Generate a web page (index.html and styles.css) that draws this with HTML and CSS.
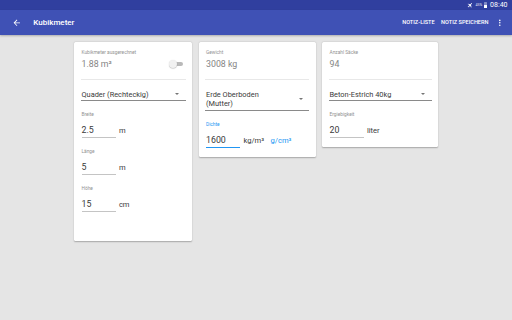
FILE: index.html
```html
<!DOCTYPE html>
<html lang="de">
<head>
    <meta charset="UTF-8">
    <meta name="viewport" content="width=device-width, initial-scale=1.0">
    <title>Kubikmeter</title>
    <link rel="stylesheet" href="styles.css">
</head>
<body>
    <!-- Status bar -->
    <div class="status-bar">
        <svg class="plane" viewBox="0 0 24 24"><path d="M21 16v-2l-8-5V3.5c0-.83-.67-1.5-1.5-1.5S10 2.67 10 3.5V9l-8 5v2l8-2.5V19l-2 1.5V22l3.5-1 3.5 1v-1.5L13 19v-5.5l8 2.5z"/></svg>
        <span class="battery-text">45%</span>
        <span class="battery"><span class="battery-fill"></span></span>
        <span class="clock">08:40</span>
    </div>

    <!-- Toolbar -->
    <header class="toolbar">
        <svg class="nav-icon" viewBox="0 0 24 24"><path d="M20 11H7.83l5.59-5.59L12 4l-8 8 8 8 1.41-1.41L7.83 13H20v-2z"/></svg>
        <h1 class="title">Kubikmeter</h1>
        <div class="actions">
            <span class="action">NOTIZ-LISTE</span>
            <span class="action">NOTIZ SPEICHERN</span>
            <svg class="menu-icon" viewBox="0 0 24 24"><path d="M12 8c1.1 0 2-.9 2-2s-.9-2-2-2-2 .9-2 2 .9 2 2 2zm0 2c-1.1 0-2 .9-2 2s.9 2 2 2 2-.9 2-2-.9-2-2-2zm0 6c-1.1 0-2 .9-2 2s.9 2 2 2 2-.9 2-2-.9-2-2-2z"/></svg>
        </div>
    </header>

    <main class="cards">
        <!-- Volume card -->
        <section class="card card-tall">
            <div class="result">
                <div class="label">Kubikmeter ausgerechnet</div>
                <div class="result-row">
                    <span class="value">1.88 m³</span>
                    <span class="switch"><span class="switch-thumb"></span></span>
                </div>
            </div>
            <div class="divider"></div>
            <div class="spinner">
                <span class="spinner-text">Quader (Rechteckig)</span>
                <span class="arrow"></span>
            </div>
            <div class="field">
                <div class="label">Breite</div>
                <div class="input-row">
                    <span class="input">2.5</span>
                    <span class="unit">m</span>
                </div>
            </div>
            <div class="field">
                <div class="label">Länge</div>
                <div class="input-row">
                    <span class="input">5</span>
                    <span class="unit">m</span>
                </div>
            </div>
            <div class="field">
                <div class="label">Höhe</div>
                <div class="input-row">
                    <span class="input">15</span>
                    <span class="unit">cm</span>
                </div>
            </div>
        </section>

        <!-- Weight card -->
        <section class="card">
            <div class="result">
                <div class="label">Gewicht</div>
                <div class="result-row">
                    <span class="value">3008 kg</span>
                </div>
            </div>
            <div class="divider"></div>
            <div class="spinner">
                <span class="spinner-text">Erde Oberboden<br>(Mutter)</span>
                <span class="arrow"></span>
            </div>
            <div class="field">
                <div class="label label-active">Dichte</div>
                <div class="input-row">
                    <span class="input input-active">1600</span>
                    <span class="unit">kg/m³</span>
                    <span class="unit unit-link">g/cm³</span>
                </div>
            </div>
        </section>

        <!-- Bags card -->
        <section class="card">
            <div class="result">
                <div class="label">Anzahl Säcke</div>
                <div class="result-row">
                    <span class="value">94</span>
                </div>
            </div>
            <div class="divider"></div>
            <div class="spinner">
                <span class="spinner-text">Beton-Estrich 40kg</span>
                <span class="arrow"></span>
            </div>
            <div class="field">
                <div class="label">Ergiebigkeit</div>
                <div class="input-row">
                    <span class="input">20</span>
                    <span class="unit">liter</span>
                </div>
            </div>
        </section>
    </main>
</body>
</html>
```

FILE: styles.css
```css
* {
    margin: 0;
    padding: 0;
    box-sizing: border-box;
}

body {
    font-family: Roboto, "Noto Sans", sans-serif;
    background-color: #e5e5e5;
    width: 512px;
    height: 320px;
    overflow: hidden;
}

/* Status bar */
.status-bar {
    height: 9.6px;
    background-color: #303f9f;
    display: flex;
    justify-content: flex-end;
    align-items: center;
    padding-right: 4.5px;
    color: #fff;
}

.plane {
    width: 6.4px;
    height: 6.4px;
    fill: #fff;
    transform: rotate(45deg);
    margin-right: 2.5px;
}

.battery-text {
    font-size: 3.6px;
    margin-right: 1.8px;
    opacity: 0.85;
}

.battery {
    width: 3.6px;
    height: 6px;
    background-color: rgba(255, 255, 255, 0.4);
    border-radius: 0.5px;
    display: flex;
    align-items: flex-end;
    margin-right: 2.6px;
}

.battery-fill {
    width: 100%;
    height: 45%;
    background-color: #fff;
}

.clock {
    font-size: 7px;
    line-height: 8px;
}

/* Toolbar */
.toolbar {
    height: 25.6px;
    background-color: #3f51b5;
    display: flex;
    align-items: center;
    padding-left: 12.4px;
    padding-right: 7.5px;
    color: #fff;
    box-shadow: 0 1px 2px rgba(0, 0, 0, 0.25);
}

.nav-icon {
    width: 9.6px;
    height: 9.6px;
    fill: #fff;
}

.title {
    font-size: 8px;
    font-weight: 500;
    margin-left: 11.3px;
    flex: 1;
}

.actions {
    display: flex;
    align-items: center;
    gap: 6.4px;
}

.action {
    font-size: 5.6px;
    font-weight: 500;
}

.menu-icon {
    width: 9.6px;
    height: 9.6px;
    fill: #fff;
}

/* Cards */
.cards {
    display: grid;
    grid-template-columns: 118px 117px 116px;
    gap: 6.5px;
    justify-content: center;
    align-items: start;
    padding-top: 6.8px;
}

.card {
    background-color: #fff;
    border-radius: 1.5px;
    box-shadow: 0 0.6px 1.5px rgba(0, 0, 0, 0.28);
    padding: 8px 6.5px 9px;
}

.card-tall {
    padding-bottom: 29px;
}

.label {
    font-size: 4.8px;
    line-height: 6px;
    color: #929292;
}

.label-active {
    color: #2196f3;
}

.result {
    padding-left: 1px;
}

.result-row {
    display: flex;
    justify-content: space-between;
    align-items: center;
    margin-top: 3px;
    height: 10px;
}

.value {
    font-size: 8.8px;
    line-height: 10px;
    color: #858585;
}

.switch {
    position: relative;
    width: 13px;
    height: 4.4px;
    background-color: #b9b9b9;
    border-radius: 2.2px;
    margin-right: 2.5px;
}

.switch-thumb {
    position: absolute;
    left: -1px;
    top: -1.8px;
    width: 8px;
    height: 8px;
    border-radius: 50%;
    background-color: #f1f1f1;
    box-shadow: 0 0.4px 1px rgba(0, 0, 0, 0.3);
}

.divider {
    height: 0.8px;
    background-color: #e8e8e8;
    margin-top: 10px;
}

.spinner {
    display: flex;
    justify-content: space-between;
    align-items: center;
    margin-top: 9.8px;
    padding-left: 1px;
    padding-bottom: 1.2px;
    border-bottom: 0.8px solid #8a8a8a;
}

.spinner-text {
    font-size: 7.4px;
    line-height: 9.4px;
    color: #3a3a3a;
}

.arrow {
    width: 0;
    height: 0;
    border-left: 2.2px solid transparent;
    border-right: 2.2px solid transparent;
    border-top: 2.2px solid #757575;
    margin-right: 6.5px;
}

.field {
    margin-top: 11px;
    padding-left: 1px;
}

.input-row {
    display: flex;
    align-items: baseline;
    margin-top: 7px;
    gap: 3px;
}

.input {
    width: 34.4px;
    font-size: 8.8px;
    line-height: 11px;
    color: #3a3a3a;
    padding-bottom: 1px;
    border-bottom: 0.8px solid #c4c4c4;
}

.input-active {
    border-bottom: 1.4px solid #2196f3;
}

.unit {
    font-size: 7.6px;
    color: #3a3a3a;
}

.unit-link {
    color: #2196f3;
    margin-left: 3.5px;
}
```
